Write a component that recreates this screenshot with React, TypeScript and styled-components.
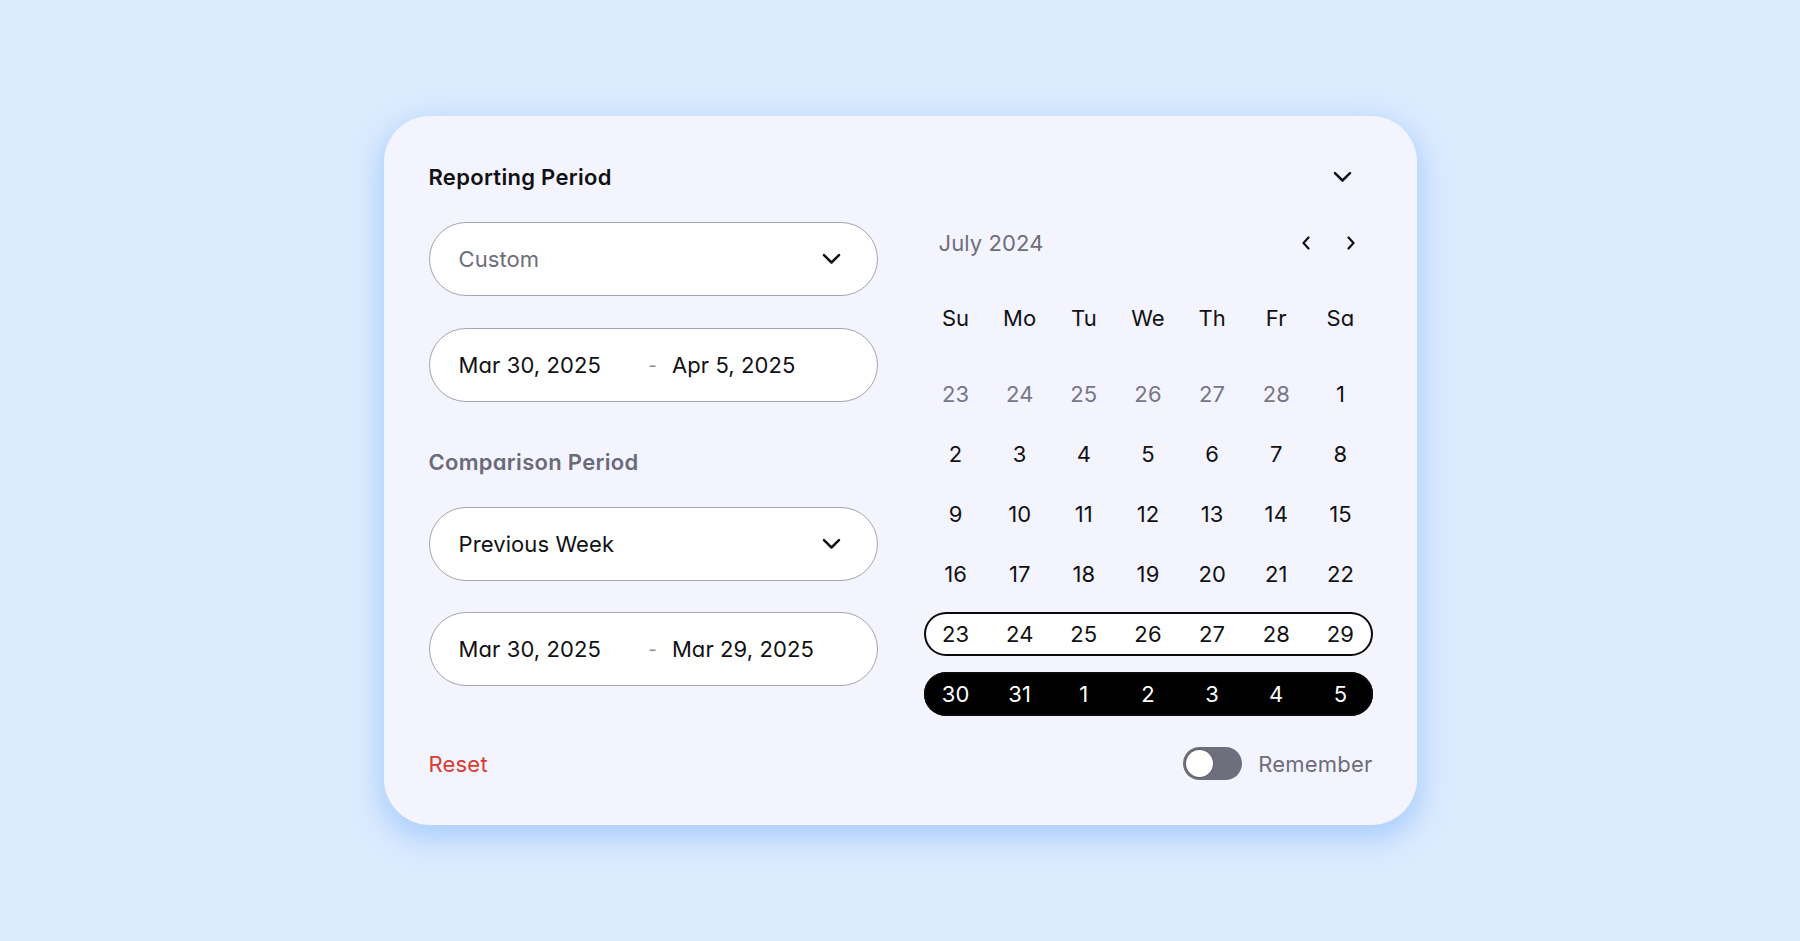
import React, { useState } from "react";
import styled, { createGlobalStyle } from "styled-components";

const GlobalStyle = createGlobalStyle`
  * { box-sizing: border-box; }
  html, body { margin: 0; padding: 0; }
  body {
    background: #dcebfe;
    font-family: Inter, "Noto Sans", "Liberation Sans", sans-serif;
    font-feature-settings: "cv11" 1;
    color: #111114;
    -webkit-font-smoothing: antialiased;
  }
`;

const Page = styled.main`
  min-height: 100vh;
  display: flex;
  align-items: center;
  justify-content: center;
`;

const Card = styled.section`
  width: 1033px;
  background: #f4f4fe;
  border-radius: 46px;
  padding: 45px 44px 45px 45px;
  box-shadow: 0 10px 26px 6px rgba(160, 200, 252, 0.75);
  display: flex;
  flex-direction: column;
`;

const Header = styled.header`
  height: 32px;
  display: flex;
  align-items: center;
  justify-content: space-between;
  margin-bottom: 29px;
`;

const Title = styled.h2<{ $muted?: boolean }>`
  margin: 0;
  font-size: 22px;
  font-weight: 600;
  letter-spacing: 0.3px;
  color: ${(p) => (p.$muted ? "#6b6a7b" : "#111114")};
`;

const IconButton = styled.button<{ $offset?: number }>`
  border: 0;
  background: transparent;
  padding: 0;
  width: 24px;
  height: 24px;
  display: flex;
  align-items: center;
  justify-content: center;
  color: #111114;
  cursor: pointer;
  margin-right: ${(p) => p.$offset ?? 0}px;
`;

const Body = styled.div`
  display: grid;
  grid-template-columns: 449px 449px;
  column-gap: 46px;
`;

const Column = styled.div`
  display: flex;
  flex-direction: column;
`;

const Field = styled.div<{ $gap?: number }>`
  height: 74px;
  border: 1.5px solid #a5a4b4;
  border-radius: 999px;
  background: #ffffff;
  display: flex;
  align-items: center;
  padding: 0 36px 0 29px;
  font-size: 22px;
  letter-spacing: 0.1px;
  margin-top: ${(p) => p.$gap ?? 0}px;
`;

const SelectText = styled.span<{ $placeholder?: boolean }>`
  flex: 1;
  color: ${(p) => (p.$placeholder ? "#6e6d7c" : "#111114")};
`;

const DateStart = styled.span`
  width: 190px;
`;

const Dash = styled.span`
  color: #8a8998;
  font-size: 18px;
  margin-right: 15px;
`;

const SectionLabel = styled(Title)`
  margin-top: 48px;
  margin-bottom: 33px;
  line-height: 24px;
`;

const Calendar = styled.div`
  display: flex;
  flex-direction: column;
`;

const MonthBar = styled.div`
  height: 42px;
  display: flex;
  align-items: center;
  justify-content: space-between;
  padding-left: 15px;
  margin-bottom: 32px;
`;

const MonthLabel = styled.span`
  font-size: 22px;
  letter-spacing: 0.1px;
  color: #6e6d7c;
`;

const Nav = styled.div`
  display: flex;
  gap: 21px;
  margin-right: 10px;
`;

const Row = styled.div<{ $variant?: "outline" | "filled" | "plain" }>`
  display: grid;
  grid-template-columns: repeat(7, 1fr);
  height: 44px;
  align-items: center;
  border-radius: 999px;
  box-shadow: ${(p) =>
    p.$variant === "outline" || p.$variant === "filled" ? "inset 0 0 0 2px #0a0a0c" : "none"};
  background: ${(p) =>
    p.$variant === "filled" ? "#000000" : p.$variant === "outline" ? "#ffffff" : "transparent"};
  color: ${(p) => (p.$variant === "filled" ? "#ffffff" : "#111114")};
  margin-bottom: 16px;
  &:last-child { margin-bottom: 0; }
`;

const WeekdayRow = styled(Row)`
  margin-bottom: 32px;
`;

const Cell = styled.span<{ $dim?: boolean }>`
  text-align: center;
  font-size: 22px;
  letter-spacing: 0.1px;
  color: ${(p) => (p.$dim ? "#77768a" : "inherit")};
`;

const Footer = styled.footer`
  margin-top: 31px;
  height: 33px;
  display: flex;
  align-items: center;
  justify-content: space-between;
`;

const ResetButton = styled.button`
  border: 0;
  background: transparent;
  padding: 0;
  font-family: inherit;
  font-feature-settings: inherit;
  font-size: 22px;
  letter-spacing: 0.2px;
  color: #d93b31;
  cursor: pointer;
`;

const RememberWrap = styled.label`
  display: flex;
  align-items: center;
  gap: 16px;
  font-size: 22px;
  letter-spacing: 0.2px;
  color: #6e6d7c;
  cursor: pointer;
`;

const Track = styled.span<{ $on: boolean }>`
  width: 59px;
  height: 33px;
  border-radius: 999px;
  background: ${(p) => (p.$on ? "#111114" : "#6f6e7d")};
  display: flex;
  align-items: center;
  padding: 3px;
  justify-content: ${(p) => (p.$on ? "flex-end" : "flex-start")};
`;

const Knob = styled.span`
  width: 27px;
  height: 27px;
  border-radius: 50%;
  background: #ffffff;
  box-shadow: 0 0 0 1px rgba(0, 0, 0, 0.12);
`;

const ChevronDown = () => (
  <svg width={19} height={12} viewBox="0 0 19 12" fill="none">
    <path d="M2 2.2 L9.5 9.5 L17 2.2" stroke="currentColor" strokeWidth="2.5" strokeLinecap="round" strokeLinejoin="round" />
  </svg>
);

const ChevronSide = ({ dir }: { dir: "left" | "right" }) => (
  <svg width={10} height={14} viewBox="0 0 10 14" fill="none">
    <path
      d={dir === "left" ? "M7.5 1.5 L2.5 7 L7.5 12.5" : "M2.5 1.5 L7.5 7 L2.5 12.5"}
      stroke="currentColor"
      strokeWidth="2.2"
      strokeLinecap="round"
      strokeLinejoin="round"
    />
  </svg>
);

const weekdays = ["Su", "Mo", "Tu", "We", "Th", "Fr", "Sa"];

type Day = { n: number; dim?: boolean };
const weeks: { days: Day[]; variant?: "outline" | "filled" }[] = [
  { days: [23, 24, 25, 26, 27, 28].map((n) => ({ n, dim: true })).concat([{ n: 1 }]) },
  { days: [2, 3, 4, 5, 6, 7, 8].map((n) => ({ n })) },
  { days: [9, 10, 11, 12, 13, 14, 15].map((n) => ({ n })) },
  { days: [16, 17, 18, 19, 20, 21, 22].map((n) => ({ n })) },
  { days: [23, 24, 25, 26, 27, 28, 29].map((n) => ({ n })), variant: "outline" },
  { days: [30, 31, 1, 2, 3, 4, 5].map((n) => ({ n })), variant: "filled" },
];

const SelectField = ({ value, placeholder, gap }: { value: string; placeholder?: boolean; gap?: number }) => (
  <Field $gap={gap}>
    <SelectText $placeholder={placeholder}>{value}</SelectText>
    <ChevronDown />
  </Field>
);

const DateRange = ({ from, to, gap }: { from: string; to: string; gap?: number }) => (
  <Field $gap={gap}>
    <DateStart>{from}</DateStart>
    <Dash>-</Dash>
    <span>{to}</span>
  </Field>
);

export default function App() {
  const [remember, setRemember] = useState(false);

  return (
    <>
      <GlobalStyle />
      <Page>
        <Card>
          <Header>
            <Title>Reporting Period</Title>
            <IconButton $offset={18} aria-label="Collapse">
              <ChevronDown />
            </IconButton>
          </Header>

          <Body>
            <Column>
              <SelectField value="Custom" placeholder />
              <DateRange from="Mar 30, 2025" to="Apr 5, 2025" gap={32} />
              <SectionLabel $muted>Comparison Period</SectionLabel>
              <SelectField value="Previous Week" />
              <DateRange from="Mar 30, 2025" to="Mar 29, 2025" gap={31} />
            </Column>

            <Calendar>
              <MonthBar>
                <MonthLabel>July 2024</MonthLabel>
                <Nav>
                  <IconButton aria-label="Previous month">
                    <ChevronSide dir="left" />
                  </IconButton>
                  <IconButton aria-label="Next month">
                    <ChevronSide dir="right" />
                  </IconButton>
                </Nav>
              </MonthBar>
              <WeekdayRow>
                {weekdays.map((d) => (
                  <Cell key={d}>{d}</Cell>
                ))}
              </WeekdayRow>
              {weeks.map((w, i) => (
                <Row key={i} $variant={w.variant ?? "plain"}>
                  {w.days.map((d, j) => (
                    <Cell key={j} $dim={d.dim}>
                      {d.n}
                    </Cell>
                  ))}
                </Row>
              ))}
            </Calendar>
          </Body>

          <Footer>
            <ResetButton>Reset</ResetButton>
            <RememberWrap onClick={() => setRemember((r) => !r)}>
              <Track $on={remember}>
                <Knob />
              </Track>
              Remember
            </RememberWrap>
          </Footer>
        </Card>
      </Page>
    </>
  );
}
